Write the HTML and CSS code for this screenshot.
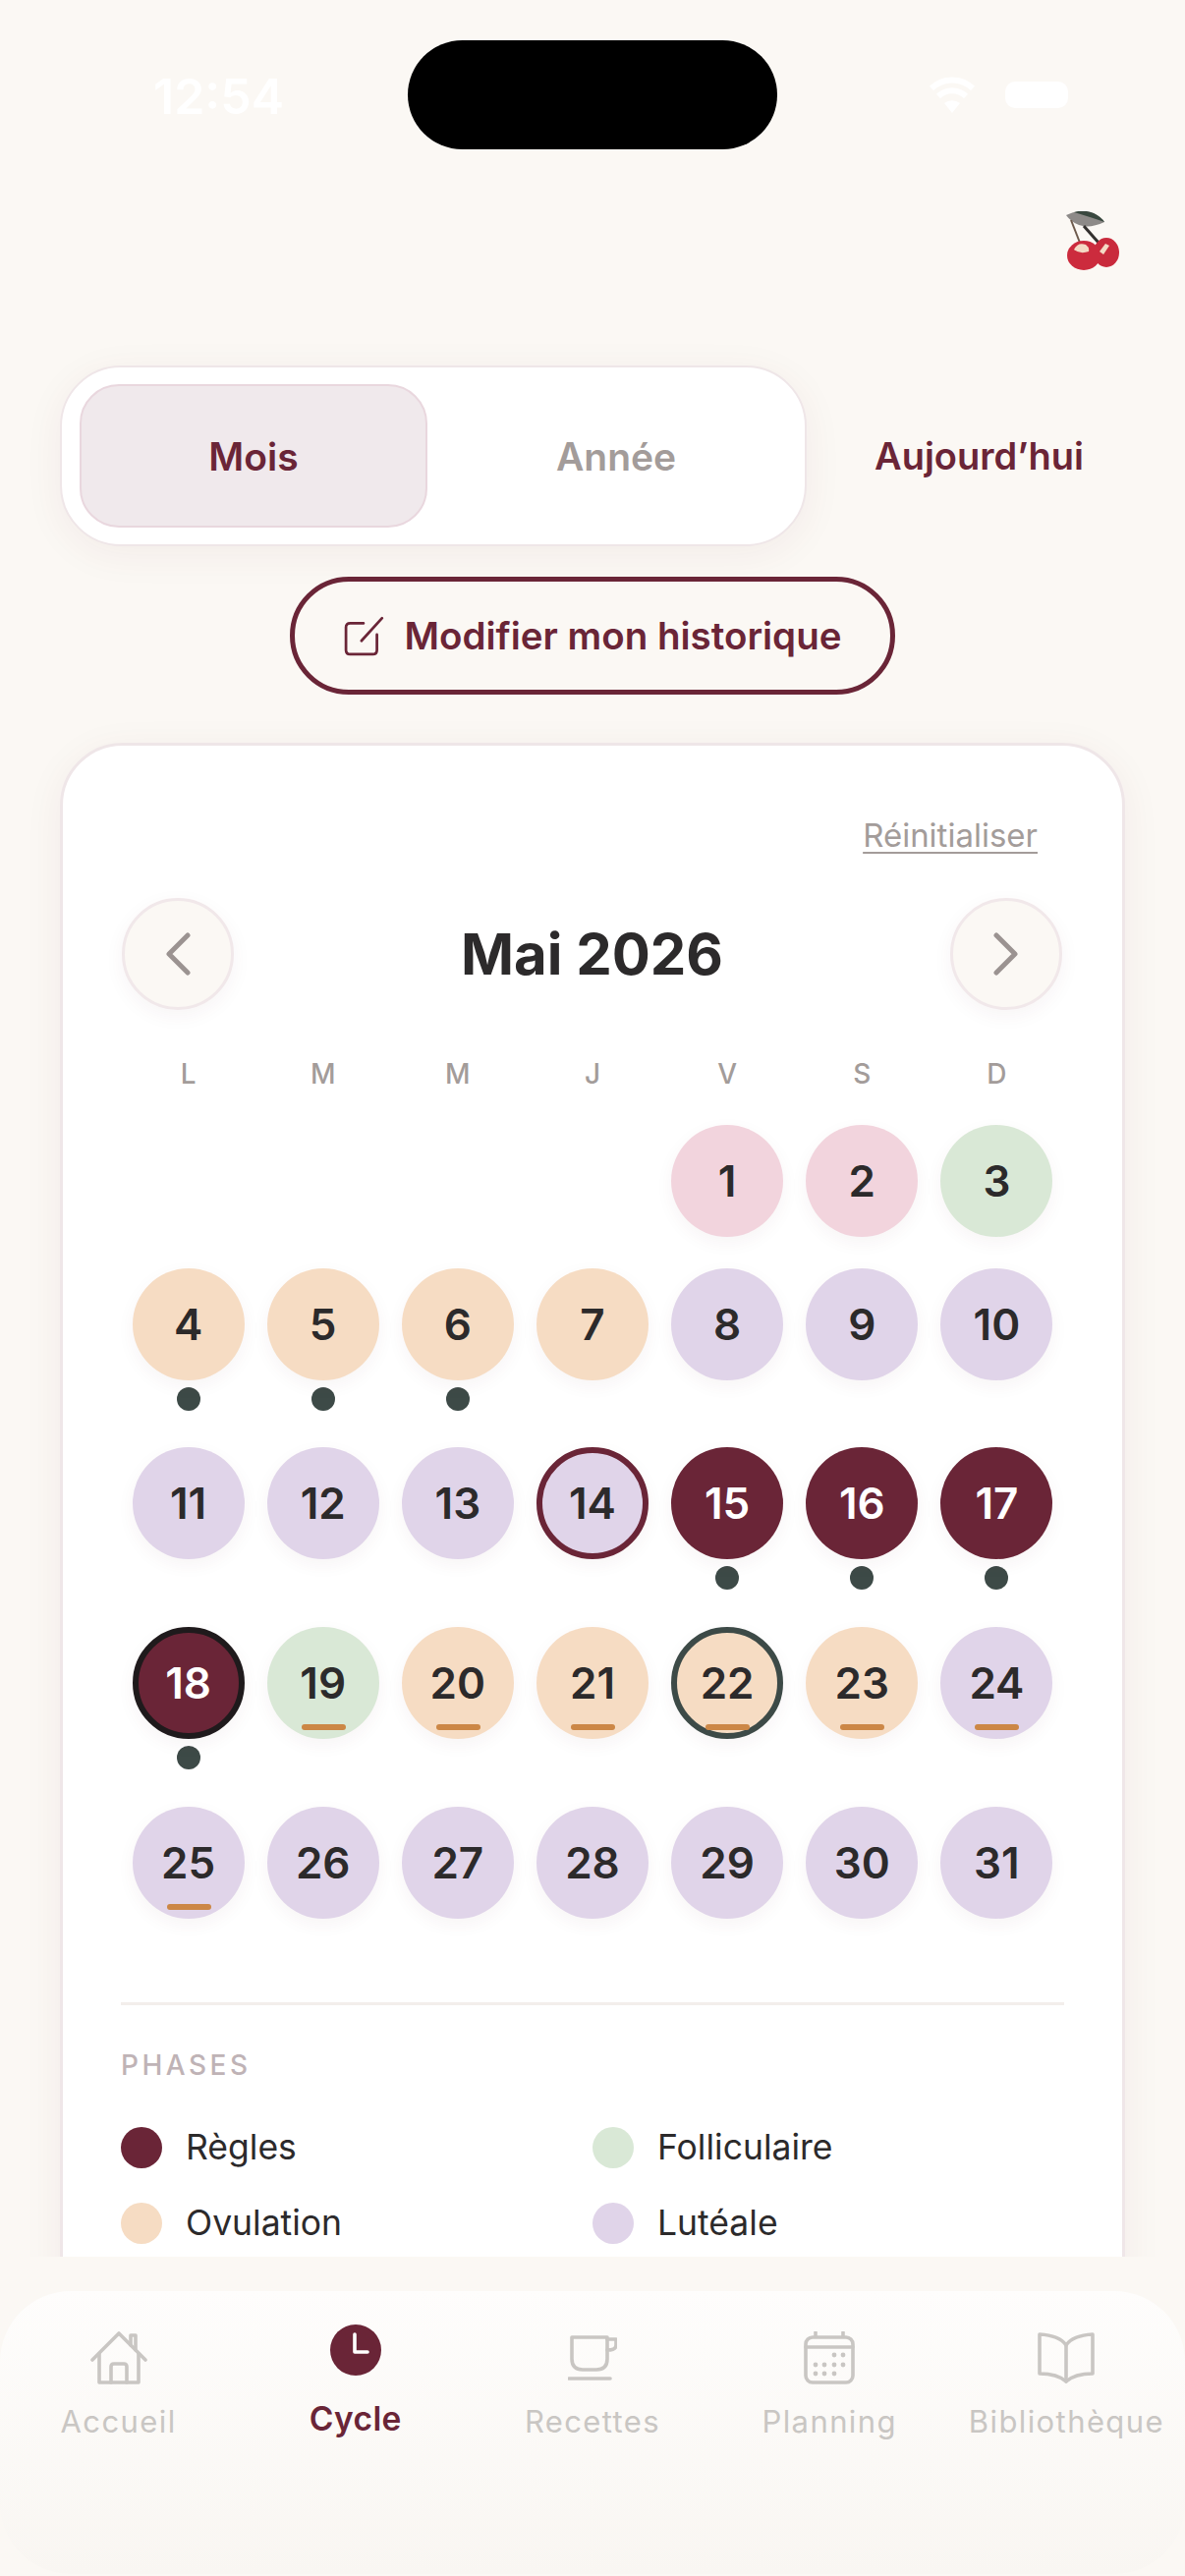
FILE: index.html
```html
<!DOCTYPE html>
<html lang="fr">
<head>
    <meta charset="UTF-8">
    <meta name="viewport" content="width=device-width, initial-scale=1.0">
    <title>Cycle</title>
    <link rel="stylesheet" href="styles.css">
</head>
<body>

    <div class="status-bar">
        <span class="time">12:54</span>
        <div class="island"></div>
        <div class="status-icons">
            <svg class="wifi" viewBox="0 0 50 37" width="50" height="37">
                <path d="M25 37 L17 27 A13 13 0 0 1 33 27 Z" fill="#fff"/>
                <path d="M11 20 A20 20 0 0 1 39 20" fill="none" stroke="#fff" stroke-width="6"/>
                <path d="M4 12 A30 30 0 0 1 46 12" fill="none" stroke="#fff" stroke-width="6"/>
            </svg>
            <div class="battery"></div>
        </div>
    </div>

    <div class="logo-row">
        <!-- cherries -->
        <svg viewBox="0 0 54 60" width="54" height="60">
            <path d="M0 4 Q14 -3 28 2 Q36 6 39 11 Q24 18 13 14 Q5 11 0 4 Z" fill="#8d8a88"/>
            <path d="M8 1 Q18 -2 28 2 Q36 6 39 11 Q28 7 8 1 Z" fill="#39483f"/>
            <path d="M5 9 L14 32" stroke="#6d5a4c" stroke-width="2" fill="none"/>
            <path d="M18 15 L33 32" stroke="#33302e" stroke-width="3" fill="none"/>
            <ellipse cx="41" cy="42" rx="13" ry="15" fill="#c92a3c"/>
            <ellipse cx="18" cy="45" rx="17" ry="15" fill="#cc2b3d"/>
            <path d="M8 39 Q12 31 20 34 Q24 37 23 41 Q14 44 8 39 Z" fill="#f4d9c4"/>
            <path d="M34 41 L40 33 L44 35 L38 44 Z" fill="#f4d9c4"/>
        </svg>
    </div>

    <div class="view-row">
        <div class="tabs">
            <div class="tab tab-active">Mois</div>
            <div class="tab">Année</div>
        </div>
        <span class="today-link">Aujourd’hui</span>
    </div>

    <div class="edit-row">
        <div class="edit-button">
            <svg viewBox="0 0 40 40" width="42" height="42" fill="none" stroke="#6a2537" stroke-width="2.6" stroke-linecap="round">
                <path d="M19 8 H6 Q2 8 2 12 V34 Q2 38 6 38 H28 Q32 38 32 34 V19"/>
                <path d="M17 25 L37 3"/>
            </svg>
            Modifier mon historique
        </div>
    </div>

    <div class="card">
        <div class="reset-row"><span class="reset">Réinitialiser</span></div>

        <div class="month-row">
            <div class="round-btn">
                <svg viewBox="0 0 26 44" width="26" height="44" fill="none" stroke="#9b9391" stroke-width="5" stroke-linecap="round" stroke-linejoin="round">
                    <path d="M23 3 L4 22 L23 41"/>
                </svg>
            </div>
            <h1>Mai 2026</h1>
            <div class="round-btn">
                <svg viewBox="0 0 26 44" width="26" height="44" fill="none" stroke="#9b9391" stroke-width="5" stroke-linecap="round" stroke-linejoin="round">
                    <path d="M3 3 L22 22 L3 41"/>
                </svg>
            </div>
        </div>

        <div class="weekdays">
            <span>L</span><span>M</span><span>M</span><span>J</span><span>V</span><span>S</span><span>D</span>
        </div>

        <div class="days">
            <div class="day"></div>
            <div class="day"></div>
            <div class="day"></div>
            <div class="day"></div>
            <div class="day"><div class="num pink">1</div></div>
            <div class="day"><div class="num pink">2</div></div>
            <div class="day"><div class="num green">3</div></div>

            <div class="day"><div class="num peach">4</div><i class="dot"></i></div>
            <div class="day"><div class="num peach">5</div><i class="dot"></i></div>
            <div class="day"><div class="num peach">6</div><i class="dot"></i></div>
            <div class="day"><div class="num peach">7</div></div>
            <div class="day"><div class="num lav">8</div></div>
            <div class="day"><div class="num lav">9</div></div>
            <div class="day"><div class="num lav">10</div></div>

            <div class="day"><div class="num lav">11</div></div>
            <div class="day"><div class="num lav">12</div></div>
            <div class="day"><div class="num lav">13</div></div>
            <div class="day"><div class="num lav ring-wine">14</div></div>
            <div class="day"><div class="num wine">15</div><i class="dot"></i></div>
            <div class="day"><div class="num wine">16</div><i class="dot"></i></div>
            <div class="day"><div class="num wine">17</div><i class="dot"></i></div>

            <div class="day"><div class="num wine ring-black">18</div><i class="dot"></i></div>
            <div class="day"><div class="num green">19<b class="bar"></b></div></div>
            <div class="day"><div class="num peach">20<b class="bar"></b></div></div>
            <div class="day"><div class="num peach">21<b class="bar"></b></div></div>
            <div class="day"><div class="num peach ring-slate">22<b class="bar"></b></div></div>
            <div class="day"><div class="num peach">23<b class="bar"></b></div></div>
            <div class="day"><div class="num lav">24<b class="bar"></b></div></div>

            <div class="day"><div class="num lav">25<b class="bar"></b></div></div>
            <div class="day"><div class="num lav">26</div></div>
            <div class="day"><div class="num lav">27</div></div>
            <div class="day"><div class="num lav">28</div></div>
            <div class="day"><div class="num lav">29</div></div>
            <div class="day"><div class="num lav">30</div></div>
            <div class="day"><div class="num lav">31</div></div>
        </div>

        <div class="divider"></div>
        <div class="phases-title">PHASES</div>
        <div class="legend">
            <div class="legend-item"><i class="swatch wine"></i>Règles</div>
            <div class="legend-item"><i class="swatch green"></i>Folliculaire</div>
            <div class="legend-item"><i class="swatch peach"></i>Ovulation</div>
            <div class="legend-item"><i class="swatch lav"></i>Lutéale</div>
        </div>
    </div>

    <div class="footer">
        <nav class="tabbar">
            <div class="nav-item">
                <div class="nav-icon">
                    <svg viewBox="0 0 58 54" width="58" height="54" fill="none" stroke="#c9c6c3" stroke-width="3.6" stroke-linecap="round" stroke-linejoin="round">
                        <path d="M2 29 L29 2 L56 29"/>
                        <path d="M41 14 V4 H46 V19"/>
                        <path d="M9 23 V52 H49 V23"/>
                        <path d="M21 52 V36 Q21 33 24 33 H34 Q37 33 37 36 V52"/>
                    </svg>
                </div>
                <span>Accueil</span>
            </div>
            <div class="nav-item nav-active">
                <div class="nav-icon">
                    <svg viewBox="0 0 52 52" width="52" height="52" fill="none">
                        <circle cx="26" cy="26" r="26" fill="#6a2537"/>
                        <path d="M25 10 V28 H38" stroke="#fff" stroke-width="3.6" stroke-linecap="round" stroke-linejoin="round"/>
                    </svg>
                </div>
                <span>Cycle</span>
            </div>
            <div class="nav-item">
                <div class="nav-icon">
                    <svg viewBox="0 0 50 46" width="50" height="46" fill="none" stroke="#c9c6c3" stroke-width="3.6" stroke-linecap="round" stroke-linejoin="round">
                        <path d="M4 2 H40 V24 Q40 35 29 35 H15 Q4 35 4 24 Z"/>
                        <path d="M40 4 H49 V10 Q49 15 40 15"/>
                        <path d="M1 44 H43"/>
                    </svg>
                </div>
                <span>Recettes</span>
            </div>
            <div class="nav-item">
                <div class="nav-icon">
                    <svg viewBox="0 0 52 54" width="52" height="54" fill="none" stroke="#c9c6c3" stroke-width="3.6" stroke-linecap="round">
                        <rect x="2" y="6" width="48" height="46" rx="7"/>
                        <path d="M2 16 H50 M12 1 V5 M40 1 V5"/>
                        <g fill="#c9c6c3" stroke="none">
                            <circle cx="31" cy="24" r="2.4"/><circle cx="40" cy="24" r="2.4"/>
                            <circle cx="12" cy="34" r="2.4"/><circle cx="21" cy="34" r="2.4"/><circle cx="31" cy="34" r="2.4"/><circle cx="40" cy="34" r="2.4"/>
                            <circle cx="12" cy="43" r="2.4"/><circle cx="21" cy="43" r="2.4"/><circle cx="31" cy="43" r="2.4"/>
                        </g>
                    </svg>
                </div>
                <span>Planning</span>
            </div>
            <div class="nav-item">
                <div class="nav-icon">
                    <svg viewBox="0 0 58 52" width="58" height="52" fill="none" stroke="#c9c6c3" stroke-width="3.6" stroke-linecap="round" stroke-linejoin="round">
                        <path d="M29 13 Q22 3 2 2 V42 Q20 42 29 50 Q38 42 56 42 V2 Q36 3 29 13 Z"/>
                        <path d="M29 13 V50"/>
                    </svg>
                </div>
                <span>Bibliothèque</span>
            </div>
        </nav>
    </div>

</body>
</html>
```

FILE: styles.css
```css
body {
    margin: 0;
    height: 2622px;
    overflow: hidden;
    position: relative;
    background-color: #fbf8f4;
    font-family: Inter, "Noto Sans", sans-serif;
    color: #2c2a2b;
}

/* Status bar */
.status-bar {
    height: 152px;
    padding-top: 41px;
    box-sizing: border-box;
    display: flex;
    justify-content: center;
    position: relative;
}
.island {
    width: 376px;
    height: 111px;
    border-radius: 56px;
    background-color: #000;
}
.time {
    position: absolute;
    left: 156px;
    top: 68px;
    font-size: 50px;
    line-height: 60px;
    font-weight: 600;
    color: #fff;
}
.status-icons {
    position: absolute;
    left: 944px;
    top: 78px;
    display: flex;
    align-items: center;
    gap: 29px;
}
.battery {
    width: 64px;
    height: 27px;
    border-radius: 10px;
    background-color: #fff;
}

.logo-row {
    height: 220px;
    padding: 63px 67px 0 0;
    box-sizing: border-box;
    display: flex;
    justify-content: flex-end;
}

/* Month / year switch */
.view-row {
    padding-left: 61px;
    display: flex;
    align-items: center;
}
.tabs {
    width: 760px;
    height: 184px;
    box-sizing: border-box;
    padding: 17px 0 17px 18px;
    display: flex;
    background-color: #fff;
    border: 2px solid #efe6e8;
    border-radius: 62px;
    box-shadow: 0 8px 40px rgba(107, 35, 55, 0.06);
}
.tab {
    display: flex;
    align-items: center;
    justify-content: center;
    font-size: 39px;
    font-weight: 600;
    color: #a39c9a;
    flex: 1;
}
.tab-active {
    width: 354px;
    flex: none;
    box-sizing: border-box;
    background-color: #f0e9ec;
    border: 2px solid #e9d7de;
    border-radius: 40px;
    color: #6a2537;
}
.today-link {
    margin-left: 69px;
    font-size: 38px;
    font-weight: 600;
    color: #6a2537;
}

.edit-row {
    margin-top: 31px;
    display: flex;
    justify-content: center;
}
.edit-button {
    width: 616px;
    height: 120px;
    box-sizing: border-box;
    display: flex;
    align-items: center;
    justify-content: center;
    gap: 20px;
    border: 5px solid #6a2537;
    border-radius: 60px;
    font-size: 38.5px;
    font-weight: 600;
    color: #6a2537;
}

/* Calendar card */
.card {
    margin: 49px 61px 0;
    height: 1700px;
    box-sizing: border-box;
    padding: 71px 59px 0 59px;
    background-color: #fff;
    border: 3px solid #efe6e8;
    border-radius: 64px;
    box-shadow: 0 8px 40px rgba(107, 35, 55, 0.06);
}
.reset-row {
    display: flex;
    justify-content: flex-end;
    padding-right: 27px;
    line-height: 40px;
}
.reset {
    font-size: 33px;
    color: #a39c9a;
    text-decoration: underline;
    text-underline-offset: 5px;
    text-decoration-thickness: 2px;
}
.month-row {
    margin-top: 44px;
    padding: 0 2px 0 1px;
    display: flex;
    align-items: center;
    justify-content: space-between;
}
.round-btn {
    width: 114px;
    height: 114px;
    box-sizing: border-box;
    display: flex;
    align-items: center;
    justify-content: center;
    background-color: #fbf8f4;
    border: 3px solid #f1e8ea;
    border-radius: 50%;
    box-shadow: 0 6px 20px rgba(107, 35, 55, 0.05);
}
h1 {
    margin: 0;
    font-size: 58px;
    font-weight: 700;
    color: #2c2a2b;
}
.weekdays {
    margin-top: 47px;
    display: grid;
    grid-template-columns: repeat(7, 1fr);
    text-align: center;
    font-size: 28px;
    line-height: 36px;
    font-weight: 500;
    color: #a39c9a;
}
.days {
    margin-top: 34px;
    display: grid;
    grid-template-columns: repeat(7, 1fr);
    grid-template-rows: 115px 151px repeat(3, auto);
    row-gap: 31px;
}
.day {
    display: flex;
    flex-direction: column;
    align-items: center;
}
.num {
    width: 114px;
    height: 114px;
    flex: none;
    box-sizing: border-box;
    position: relative;
    display: flex;
    align-items: center;
    justify-content: center;
    border-radius: 50%;
    font-size: 44px;
    font-weight: 600;
    box-shadow: 0 6px 18px rgba(107, 35, 55, 0.05);
}
.pink { background-color: #f2d4dd; }
.green { background-color: #d9e8d6; }
.peach { background-color: #f6dcc3; }
.lav { background-color: #e0d4e9; }
.wine { background-color: #6a2537; color: #fff; }
.ring-wine { border: 6px solid #6a2537; }
.ring-black { border: 6px solid #1f1a1c; }
.ring-slate { border: 6px solid #3d4a47; }
.dot {
    width: 24px;
    height: 24px;
    flex: none;
    margin: 7px 0;
    border-radius: 50%;
    background-color: #3d4a47;
}
.bar {
    position: absolute;
    left: 50%;
    bottom: 9px;
    width: 45px;
    height: 6px;
    margin-left: -22px;
    border-radius: 3px;
    background-color: #cc8746;
}
.ring-slate .bar { bottom: 3px; }

.divider {
    margin-top: 85px;
    height: 3px;
    background-color: #f3eeeb;
}
.phases-title {
    margin-top: 43px;
    font-size: 28px;
    line-height: 36px;
    font-weight: 500;
    letter-spacing: 3.5px;
    color: #bfb3b6;
}
.legend {
    margin-top: 45px;
    display: grid;
    grid-template-columns: 480px 1fr;
    row-gap: 35px;
}
.legend-item {
    display: flex;
    align-items: center;
    gap: 24px;
    font-size: 35.5px;
    line-height: 42px;
    color: #2c2a2b;
}
.swatch {
    width: 42px;
    height: 42px;
    border-radius: 50%;
}

/* Bottom navigation */
.footer {
    position: absolute;
    left: 0;
    right: 0;
    bottom: 0;
    height: 325px;
    padding-top: 35px;
    box-sizing: border-box;
    background-color: #fbf8f4;
}
.tabbar {
    height: 288px;
    box-sizing: border-box;
    padding-top: 32px;
    display: grid;
    grid-template-columns: repeat(5, 1fr);
    align-items: start;
    background: linear-gradient(#fefdfc, #f9f6f2);
    border-radius: 72px;
}
.nav-item {
    display: flex;
    flex-direction: column;
    align-items: center;
    font-size: 31px;
    letter-spacing: 1.4px;
    color: #c9c6c3;
}
.nav-icon {
    height: 72px;
    display: flex;
    align-items: center;
    justify-content: center;
}
.nav-item span {
    margin-top: 9px;
    line-height: 40px;
    white-space: nowrap;
}
.nav-active {
    color: #6a2537;
    font-size: 33.5px;
    font-weight: 600;
    letter-spacing: 0.4px;
}
.nav-active .nav-icon {
    margin-top: -8px;
}
.nav-active span {
    margin-top: 14px;
}
```
